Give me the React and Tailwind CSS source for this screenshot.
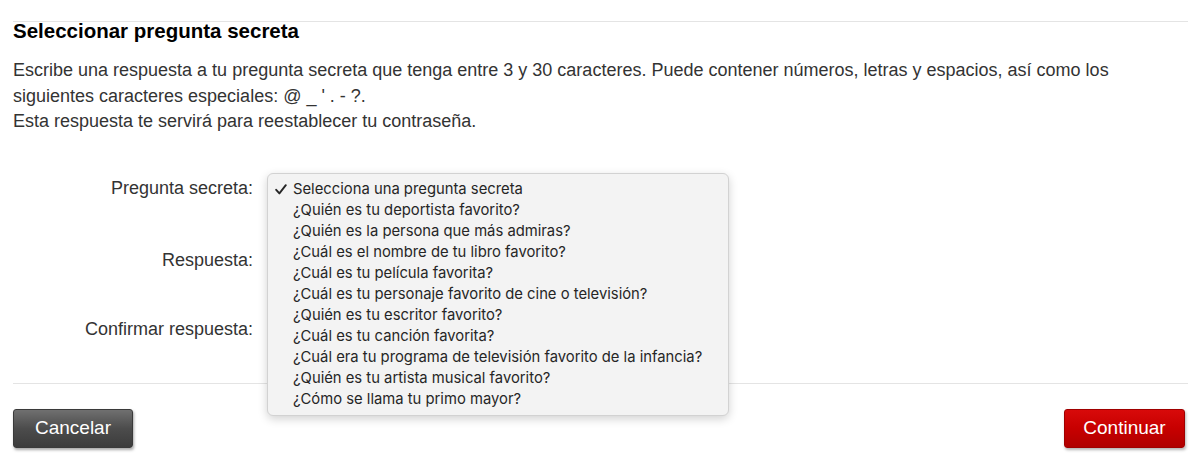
import React from 'react';

const questions = [
  'Selecciona una pregunta secreta',
  '¿Quién es tu deportista favorito?',
  '¿Quién es la persona que más admiras?',
  '¿Cuál es el nombre de tu libro favorito?',
  '¿Cuál es tu película favorita?',
  '¿Cuál es tu personaje favorito de cine o televisión?',
  '¿Quién es tu escritor favorito?',
  '¿Cuál es tu canción favorita?',
  '¿Cuál era tu programa de televisión favorito de la infancia?',
  '¿Quién es tu artista musical favorito?',
  '¿Cómo se llama tu primo mayor?',
];

// --- Label + field row ---
const FormRow = ({ label, children, className = '' }) => (
  <div className={`flex items-center ${className}`}>
    <label className="w-[240px] text-right text-[18px] text-[#333]">{label}</label>
    <div className="ml-[14px] relative">{children}</div>
  </div>
);

export default function App() {
  return (
    <div className="w-[1200px] h-[474px] bg-white pl-[13px] pr-[12px] pt-[21px] overflow-hidden" style={{ fontFamily: '"Liberation Sans", Arial, sans-serif' }}>
      <div className="border-t border-[#e4e4e4]">
        <h2 className="text-[20.5px] font-bold text-black leading-[18px]">Seleccionar pregunta secreta</h2>
        <p className="mt-[18px] text-[18px] leading-[25.5px] text-[#333]">
          Escribe una respuesta a tu pregunta secreta que tenga entre 3 y 30 caracteres. Puede contener números, letras y espacios, así como los siguientes caracteres especiales: @ _ ' . - ?.
          <br />
          Esta respuesta te servirá para reestablecer tu contraseña.
        </p>

        {/* Form */}
        <div className="mt-[42px] flex flex-col">
          <FormRow label="Pregunta secreta:" className="h-[24px]">
            {/* open select menu */}
            <div className="absolute left-[0px] top-[-16px] w-[462px] rounded-[6px] border border-[#d2d2d2] bg-[#f3f3f3] py-[5px] shadow-[0_3px_10px_rgba(0,0,0,0.18)] z-10" style={{ fontFamily: 'Inter, "Noto Sans", sans-serif' }}>
              {questions.map((q, i) => (
                <div key={q} className="relative h-[21px] leading-[21px] pl-[25px] text-[14.8px] text-[#262626] whitespace-nowrap">
                  {i === 0 && (
                    <svg className="absolute left-[7px] top-[5px]" width="12" height="11" viewBox="0 0 12 11" fill="none">
                      <path d="M1.2 5.8 L4.4 9.4 L10.8 1.2" stroke="#262626" strokeWidth="1.9" strokeLinecap="round" strokeLinejoin="round" />
                    </svg>
                  )}
                  {q}
                </div>
              ))}
            </div>
          </FormRow>
          <FormRow label="Respuesta:" className="h-[24px] mt-[48px]" />
          <FormRow label="Confirmar respuesta:" className="h-[24px] mt-[45px]" />
        </div>

        <div className="mt-[41px] border-t border-[#e4e4e4] flex justify-between items-start pt-[25px] pr-[3px]">
          <button className="w-[120px] h-[39px] rounded-[3px] text-white text-[19px] bg-gradient-to-b from-[#707070] via-[#4c4c4c] to-[#3c3c3c] border border-[#3a3a3a] shadow-[1px_2px_3px_rgba(0,0,0,0.35)]">
            Cancelar
          </button>
          <button className="w-[121px] h-[39px] rounded-[3px] text-white text-[19px] bg-gradient-to-b from-[#d80a0a] via-[#c70000] to-[#b00000] border border-[#a00000] shadow-[1px_2px_3px_rgba(0,0,0,0.3)]">
            Continuar
          </button>
        </div>
      </div>
    </div>
  );
}
